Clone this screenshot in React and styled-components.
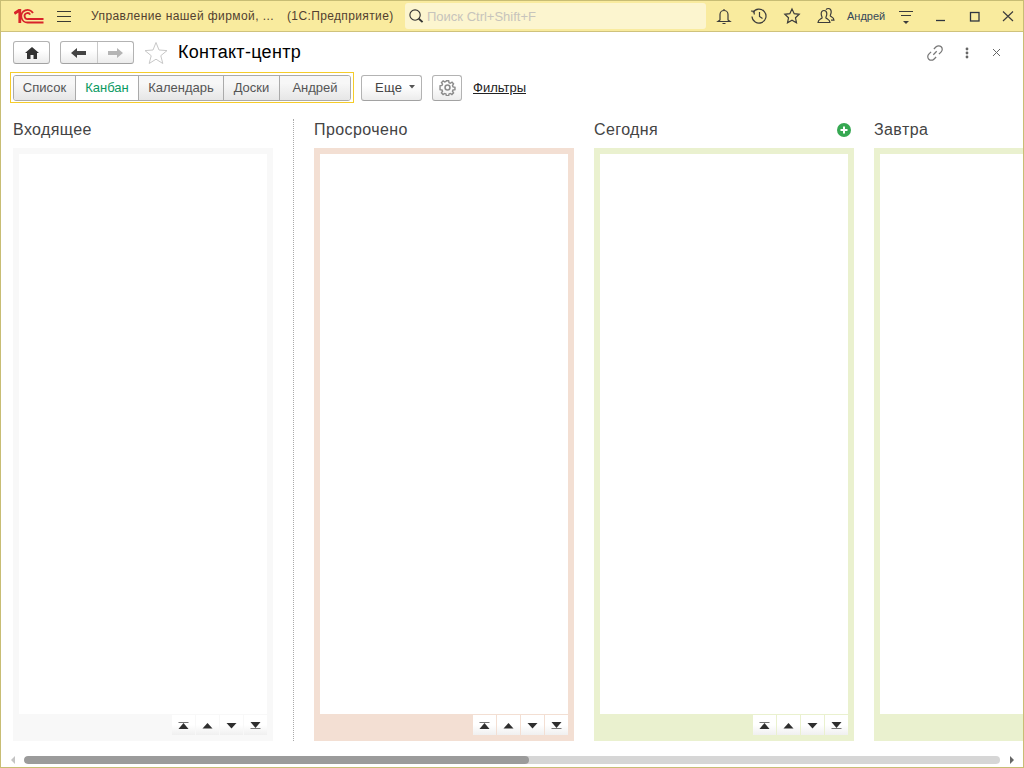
import React from 'react';
import styled, { createGlobalStyle } from 'styled-components';

const Global = createGlobalStyle`
  html, body { margin: 0; padding: 0; background: #fff; }
  body { font-family: "Liberation Sans", Arial, sans-serif; }
`;

const Win = styled.div`
  width: 1024px; height: 768px; box-sizing: border-box;
  border: 1px solid #c8bd74;
  display: flex; flex-direction: column; overflow: hidden; background: #fff;
`;
const TitleBar = styled.div`
  height: 30px; flex: none;
  background: #f9eb9e; border-bottom: 1px solid #cfc27c;
  display: flex; align-items: center; color: #4a3c1e; font-size: 12px;
`;
const Logo = styled.svg`width: 30px; height: 16px; margin-left: 13px; flex: none;`;
const Burger = styled.svg`width: 16px; height: 14px; margin-left: 12px; flex: none;`;
const AppName = styled.span`margin-left: 19px; color: #523f30; white-space: nowrap; width: 196px; flex: none; letter-spacing: .42px;`;
const AppSuffix = styled.span`color: #523f30; white-space: nowrap; width: 118px; flex: none; letter-spacing: .37px;`;
const Search = styled.div`
  width: 301px; height: 26px; border-radius: 3px; background: #fcf5cf; flex: none;
  display: flex; align-items: center; gap: 3px; padding-left: 3px; box-sizing: border-box;
  color: #c7c4bc; font-size: 13px;
`;
const TopIcon = styled.svg`width: 20px; height: 20px; flex: none; margin-left: ${p => p.$ml || 0}px; display: block;`;
const UserName = styled.span`font-size: 11px; color: #35485a; margin-left: 11px; width: 38px; flex: none; white-space: nowrap;`;

const Content = styled.div`flex: 1; display: flex; flex-direction: column; min-height: 0;`;
const HeadRow = styled.div`
  height: 23px; margin-top: 9px; padding-left: 12px; padding-right: 22px; display: flex; align-items: center; flex: none;
`;
const Btn = styled.div`
  height: 23px; box-sizing: border-box; flex: none;
  border: 1px solid #b3b3b3; border-bottom-color: #a2a2a2; border-radius: 3px;
  background: linear-gradient(#fff 40%, #ececec);
  display: flex; align-items: center; justify-content: center;
  color: #333; font-size: 13px;
`;
const HomeBtn = styled(Btn)`width: 37px;`;
const NavGroup = styled(Btn)`width: 74px; margin-left: 10px;`;
const NavCell = styled.div`
  flex: 1; height: 100%; display: flex; align-items: center; justify-content: center;
  & + & { border-left: 1px solid #c9c9c9; }
`;
const Star = styled.svg`width: 24px; height: 24px; margin-left: 10px; flex: none;`;
const Title = styled.h1`margin: 0 0 0 10px; font-size: 18px; font-weight: 400; color: #000; flex: 1; letter-spacing: .3px;`;
const RightIcons = styled.div`display: flex; align-items: center; gap: 21px;`;
const CloseIcon = styled.svg`margin-left: 2px; flex: none;`;

const ToolRow = styled.div`
  height: 31px; margin-top: 8px; margin-left: 9px; display: flex; align-items: center; flex: none;
`;
const TabFrame = styled.div`
  width: 344px; height: 31px; box-sizing: border-box; border: 1px solid #f5cc2a;
  padding: 2px; flex: none;
`;
const Tabs = styled.div`
  display: flex; border: 1px solid #aaa; border-radius: 3px; overflow: hidden;
  box-sizing: border-box; width: 338px; height: 26px;
`;
const Tab = styled.div`
  width: ${p => p.$w}px; flex: none; box-sizing: border-box; padding-bottom: 1px;
  display: flex; align-items: center; justify-content: center; font-size: 13px;
  color: ${p => p.$active ? '#0a9a62' : '#555'};
  background: ${p => p.$active ? '#fff' : 'linear-gradient(#f7f7f7 30%, #e6e6e6)'};
  & + & { border-left: 1px solid #aaa; }
`;
const MoreBtn = styled(Btn)`
  width: 61px; height: 26px; margin-left: 7px; gap: 7px; color: #444; justify-content: flex-start;
  padding: 0 0 1px 13px; letter-spacing: .3px;
`;
const GearBtn = styled(Btn)`width: 30px; height: 26px; margin-left: 10px;`;
const FilterLink = styled.a`margin-left: 11px; font-size: 13px; color: #222; text-decoration: underline;`;

const Board = styled.div`
  flex: 1; min-height: 0; display: flex; padding-left: 12px; margin-top: 16px; overflow: hidden;
`;
const Column = styled.div`
  width: 260px; flex: none; display: flex; flex-direction: column;
  margin-left: ${p => p.$ml || 0}px;
`;
const ColHead = styled.div`
  height: 18px; padding: 2px 3px 9px 0; flex: none; display: flex; align-items: center; justify-content: space-between;
  font-size: 16px; color: #444; letter-spacing: .4px;
`;
const Panel = styled.div`
  flex: 1; background: ${p => p.$bg}; display: flex; flex-direction: column;
  padding: 6px 6px 0;
`;
const Card = styled.div`flex: 1; background: #fff;`;
const Pager = styled.div`
  flex: none; display: flex; justify-content: flex-end; gap: 1px; padding: 1px 0 6px;
`;
const PagerBtn = styled.div`
  width: 23px; height: 20px; background: linear-gradient(#fff 50%, #f0f0f0);
  display: flex; align-items: center; justify-content: center;
`;
const Sep = styled.div`
  width: 0; flex: none; border-left: 1px dotted #aaa; margin: 0 20px;
`;
const ScrollRow = styled.div`
  height: 8px; flex: none; display: flex; align-items: center; margin: 15px 0 3px;
`;
const Arrow = styled.div`
  width: 0; height: 0; flex: none; border-top: 4px solid transparent; border-bottom: 4px solid transparent;
  ${p => p.$left ? 'border-right: 4px solid #c4c4c4; margin-left: 10px; margin-right: 9px;' : 'border-left: 4px solid #666; margin-left: 10px;'}
`;
const Track = styled.div`width: 976px; height: 8px; border-radius: 4px; background: #d6d6d6; flex: none; overflow: hidden;`;
const Thumb = styled.div`height: 8px; border-radius: 4px; background: #9b9b9b;`;

const ic = { fill: 'none', stroke: '#3c3c3c', strokeWidth: 1.2, viewBox: '0 0 20 20' };

const PagerIcon = ({ kind }) => (
  <svg width="11" height="9" viewBox="0 0 11 9">
    {kind === 'top' && <><rect x="0.5" y="1" width="10" height="1" fill="#777" /><path d="M5.5 2 L10.500 8 H.5 Z" fill="#2e2e2e" /></>}
    {kind === 'up' && <path d="M5.5 2 L10.500 7.500 H.5 Z" fill="#2e2e2e" />}
    {kind === 'down' && <path d="M5.5 7.500 L10.500 2 H.5 Z" fill="#2e2e2e" />}
    {kind === 'bottom' && <><path d="M5.5 7 L10.500 1 H.5 Z" fill="#2e2e2e" /><rect x="0.5" y="7" width="10" height="1" fill="#777" /></>}
  </svg>
);

const KanbanColumn = ({ title, bg, add, ml }) => (
  <Column $ml={ml}>
    <ColHead>
      <span>{title}</span>
      {add && (
        <svg width="14" height="14" viewBox="0 0 14 14">
          <circle cx="7" cy="7" r="7" fill="#36a852" />
          <path d="M7 3.500v7M3.500 7h7" stroke="#fff" strokeWidth="2" />
        </svg>
      )}
    </ColHead>
    <Panel $bg={bg}>
      <Card />
      <Pager>
        {['top', 'up', 'down', 'bottom'].map(k => <PagerBtn key={k}><PagerIcon kind={k} /></PagerBtn>)}
      </Pager>
    </Panel>
  </Column>
);

export default function App() {
  return (
    <Win>
      <Global />
      <TitleBar>
        <Logo viewBox="0 0 30 16">
          <path d="M0.300 5.500 L5 2.500 H5.800 V15" fill="none" stroke="#d8232a" strokeWidth="2.800" />
          <path d="M19 5 A6.300 6.300 0 1 0 14 14.500 H29.500" fill="none" stroke="#d8232a" strokeWidth="1.800" />
          <path d="M16.200 6.600 A3 3 0 1 0 14 11 H29.500" fill="none" stroke="#d8232a" strokeWidth="1.800" />
        </Logo>
        <Burger viewBox="0 0 16 14">
          <path d="M1 2.500h14M1 7.500h14M1 12.500h14" stroke="#3b3b33" strokeWidth="1" fill="none" />
        </Burger>
        <AppName>Управление нашей фирмой, ...</AppName>
        <AppSuffix>(1С:Предприятие)</AppSuffix>
        <Search>
          <svg width="16" height="16" viewBox="0 0 17 17" fill="none" stroke="#333" strokeWidth="1.200">
            <circle cx="7.500" cy="7.500" r="5.500" /><path d="M11.500 11.500 L15.500 15" strokeWidth="2" />
          </svg>
          Поиск Ctrl+Shift+F
        </Search>
        <TopIcon {...ic} $ml={8}>
          <path d="M6 14V8.500a4 4 0 0 1 8 0V14l2 1.500H4Z M8.500 17.500h3 M10 4.500V3" />
        </TopIcon>
        <TopIcon {...ic} $ml={15}>
          <path d="M4 6.500a7 7 0 1 1-1 4M10.500 6v4.500l3 2" /><path d="M2 5l3 .3 .3 3.200" />
        </TopIcon>
        <TopIcon {...ic} $ml={13}>
          <path d="M10 3l2.200 4.700 5 .6-3.700 3.500 1 5L10 14.300l-4.500 2.500 1-5-3.700-3.500 5-.6Z" />
        </TopIcon>
        <TopIcon {...ic} $ml={14}>
          <path d="M2 16.500c0-3 3-3.500 4-4.500.6-.7-.8-2-.8-4.300 0-2 1-3.200 2.800-3.200s2.800 1.200 2.800 3.200c0 2.300-1.400 3.600-.8 4.300 1 1 4 1.500 4 4.500Z" />
          <path d="M10 3.700c.6-.8 1.400-1.200 2.400-1.200 1.800 0 2.800 1.200 2.800 3.200 0 2.300-1.400 3.600-.8 4.300.9.900 3.600 1.300 3.600 4.200h-3" />
        </TopIcon>
        <UserName>Андрей</UserName>
        <TopIcon viewBox="0 0 20 20" fill="none" $ml={12}>
          <path d="M2 5.500h14M4 9.500h10" stroke="#3c3c3c" strokeWidth="1" />
          <path d="M6 15h6l-3 3Z" fill="#3c3c3c" />
        </TopIcon>
        <TopIcon viewBox="0 0 20 20" fill="none" $ml={14}>
          <path d="M5 14.500h9" stroke="#2f3540" strokeWidth="1.300" />
        </TopIcon>
        <TopIcon viewBox="0 0 20 20" fill="none" $ml={14}>
          <rect x="5.500" y="6.500" width="8.500" height="8.500" stroke="#2f3540" strokeWidth="1.300" />
        </TopIcon>
        <TopIcon viewBox="0 0 20 20" fill="none" $ml={13}>
          <path d="M5 5.500l10 9.500M15 5.500L5 15" stroke="#3c3c3c" strokeWidth="1.200" />
        </TopIcon>
      </TitleBar>
      <Content>
        <HeadRow>
          <HomeBtn>
            <svg width="14" height="12" viewBox="0 0 14 12"><path d="M7 0 L14 6 H12 V12 H8.500 V8 H5.500 V12 H2 V6 H0 Z" fill="#333" /></svg>
          </HomeBtn>
          <NavGroup>
            <NavCell>
              <svg width="15" height="10" viewBox="0 0 15 10"><path d="M0 5 L6 0 V3 H15 V7 H6 V10 Z" fill="#444" /></svg>
            </NavCell>
            <NavCell>
              <svg width="15" height="10" viewBox="0 0 15 10"><path d="M15 5 L9 0 V3 H0 V7 H9 V10 Z" fill="#b5b5b5" /></svg>
            </NavCell>
          </NavGroup>
          <Star viewBox="0 0 24 24" fill="none" stroke="#c8c8c8" strokeWidth="1">
            <path d="M12 1.500l3 7.500 8 .6-6.200 5.100 2 7.800L12 18.200l-6.800 4.300 2-7.800L1 9.600l8-.6Z" />
          </Star>
          <Title>Контакт-центр</Title>
          <RightIcons>
            <svg width="18" height="18" viewBox="0 0 16 16" fill="none" stroke="#777" strokeWidth="1.100">
              <path d="M6.500 9.500l3-3M7 4.500l2-2a3 3 0 0 1 4.500 4.500l-2 2M9 11.500l-2 2a3 3 0 0 1-4.500-4.500l2-2" />
            </svg>
            <svg width="4" height="12" viewBox="0 0 4 12" fill="#666">
              <circle cx="2" cy="2" r="1.400" /><circle cx="2" cy="6" r="1.400" /><circle cx="2" cy="10" r="1.400" />
            </svg>
            <CloseIcon width="9" height="9" viewBox="0 0 9 9" stroke="#666" strokeWidth="1">
              <path d="M1 1l7 7M8 1l-7 7" />
            </CloseIcon>
          </RightIcons>
        </HeadRow>
        <ToolRow>
          <TabFrame>
            <Tabs>
              <Tab $w={61}>Список</Tab>
              <Tab $w={63} $active>Канбан</Tab>
              <Tab $w={85}>Календарь</Tab>
              <Tab $w={56}>Доски</Tab>
              <Tab $w={71}>Андрей</Tab>
            </Tabs>
          </TabFrame>
          <MoreBtn>Еще
            <svg width="6" height="4" viewBox="0 0 6 4"><path d="M0 0h6L3 3.500Z" fill="#555" /></svg>
          </MoreBtn>
          <GearBtn>
            <svg width="17" height="17" viewBox="0 0 16 16" fill="none" stroke="#8c8c8c" strokeWidth="1.500">
              <circle cx="8" cy="8" r="2.300" />
              <path d="M6.800 1h2.400l.4 2 1.300.6 1.800-1.100 1.600 1.700-1.100 1.700.6 1.400 2 .4v2.500l-2 .4-.6 1.300 1.100 1.700-1.700 1.700-1.700-1.100-1.300.5-.4 2H6.800l-.4-2-1.300-.5-1.700 1.100-1.700-1.700 1.100-1.700-.6-1.300-2-.4V6.300l2-.4.6-1.400-1.100-1.700 1.700-1.700 1.700 1.100 1.300-.6Z" transform="translate(.8 .8) scale(.9)" />
            </svg>
          </GearBtn>
          <FilterLink>Фильтры</FilterLink>
        </ToolRow>
        <Board>
          <KanbanColumn title="Входящее" bg="#f8f8f8" />
          <Sep />
          <KanbanColumn title="Просрочено" bg="#f3dfd3" />
          <KanbanColumn title="Сегодня" bg="#eaf1cf" add ml={20} />
          <KanbanColumn title="Завтра" bg="#eaf1cf" ml={20} />
        </Board>
        <ScrollRow>
          <Arrow $left />
          <Track><Thumb style={{ width: 505 }} /></Track>
          <Arrow />
        </ScrollRow>
      </Content>
    </Win>
  );
}
